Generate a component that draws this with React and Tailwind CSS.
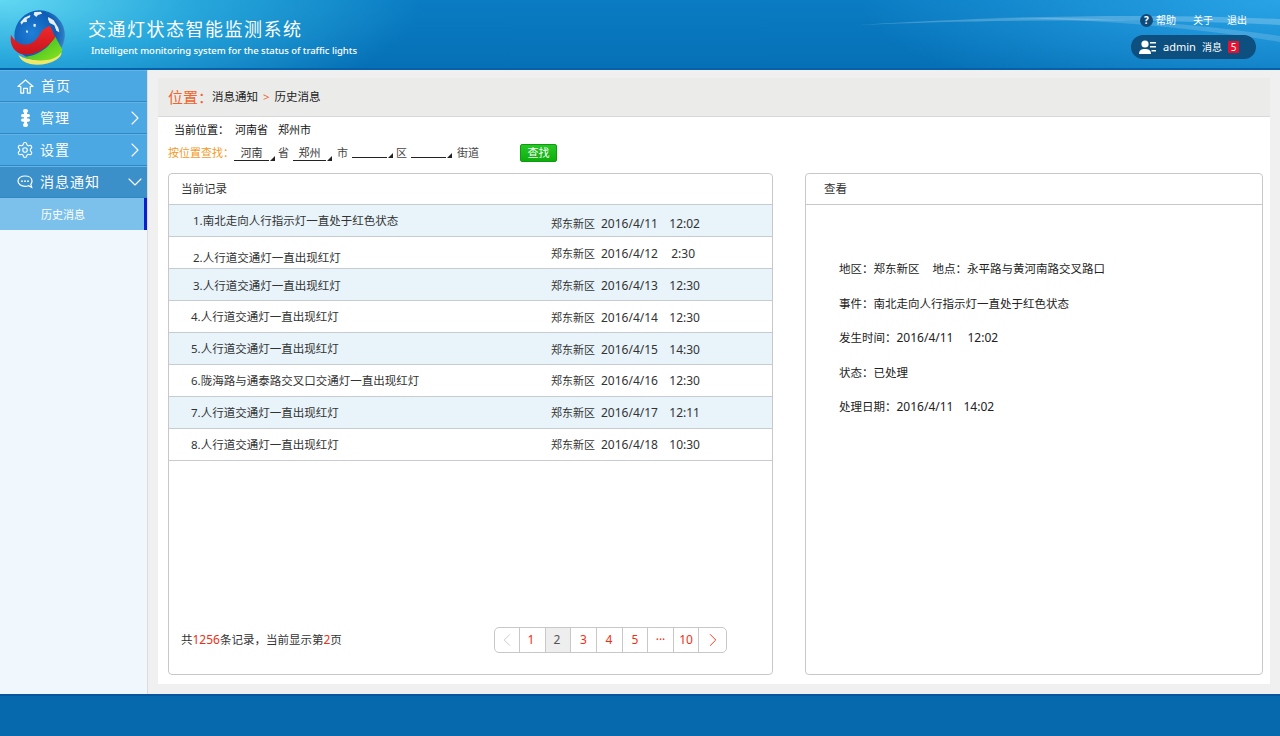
import { Settings, ChevronRight, ChevronDown, ChevronLeft } from 'lucide-react';

const FONT = "font-['Noto_Sans','Noto_Sans_CJK_SC',sans-serif]";

const RECORDS = [
  { text: '1.南北走向人行指示灯一直处于红色状态', date: '2016/4/11', time: '12:02', bg: 'bg-[#e8f3fa]', cls: 'pl-[24px] pt-[1px]', right: 'pt-[6px]' },
  { text: '2.人行道交通灯一直出现红灯', date: '2016/4/12', time: '2:30', bg: 'bg-white', cls: 'pl-[24px] pt-[10px]', right: 'pt-[2px]', timeCls: 'pr-[5px]' },
  { text: '3.人行道交通灯一直出现红灯', date: '2016/4/13', time: '12:30', bg: 'bg-[#e8f3fa]', cls: 'pl-[24px] pt-[2px]', right: 'pt-[2px]' },
  { text: '4.人行道交通灯一直出现红灯', date: '2016/4/14', time: '12:30', bg: 'bg-white', cls: 'pl-[22px]', right: 'pt-[2px]' },
  { text: '5.人行道交通灯一直出现红灯', date: '2016/4/15', time: '14:30', bg: 'bg-[#e8f3fa]', cls: 'pl-[22px]', right: 'pt-[2px]' },
  { text: '6.陇海路与通泰路交叉口交通灯一直出现红灯', date: '2016/4/16', time: '12:30', bg: 'bg-white', cls: 'pl-[22px]', right: '' },
  { text: '7.人行道交通灯一直出现红灯', date: '2016/4/17', time: '12:11', bg: 'bg-[#e8f3fa]', cls: 'pl-[22px]', right: '' },
  { text: '8.人行道交通灯一直出现红灯', date: '2016/4/18', time: '10:30', bg: 'bg-white', cls: 'pl-[22px]', right: '' },
];

const PAGES = [
  { label: '1', w: 'w-[26px] pr-[3px]' },
  { label: '2', w: 'w-[25px] pr-[2px]', active: true },
  { label: '3', w: 'w-[26px]' },
  { label: '4', w: 'w-[26px] pr-[1px]' },
  { label: '5', w: 'w-[25px]' },
  { label: '···', w: 'w-[26px]' },
  { label: '10', w: 'w-[25px]' },
];

function Logo() {
  return (
    <svg width="70" height="65" viewBox="0 0 210 195" className="shrink-0">
      <defs>
        <radialGradient id="globe" cx="0.35" cy="0.45" r="0.72">
          <stop offset="0" stopColor="#1f7fd8" />
          <stop offset="0.65" stopColor="#0d5cb4" />
          <stop offset="0.88" stopColor="#2f7fc4" />
          <stop offset="1" stopColor="#b9d6ea" />
        </radialGradient>
        <linearGradient id="red" x1="0" y1="0" x2="0" y2="1">
          <stop offset="0" stopColor="#f02a2a" />
          <stop offset="1" stopColor="#c8141e" />
        </linearGradient>
        <linearGradient id="green" x1="0" y1="0" x2="1" y2="1">
          <stop offset="0" stopColor="#1fae2c" />
          <stop offset="1" stopColor="#8fe61c" />
        </linearGradient>
      </defs>
      <circle cx="104" cy="98" r="76" fill="url(#globe)" />
      <path d="M46 58l12-14 18-8-1 7-10 5 1 9-11 1-5 7zM88 27l20-1 3 6-12 4-5 6-8-7zM130 42l16 10 14 22 3 14-9-5-6-16-14-7-5-11zM86 62l7 2-2 9-6-3zM64 82l5 1-1 7-5-2z" fill="#e6eef6" />
      <path d="M40 155c20 16 60 24 130-7-1 10-6 16-16 22-30 18-72 20-96 6-10-6-15-14-18-21z" fill="#efe86a" />
      <path d="M150 100l22 40c-4 14-16 22-32 28-28 8-60 4-84-6 30-2 58-16 76-36z" fill="url(#green)" />
      <path d="M18 95c8 16 24 30 44 30 24-1 38-20 48-40 8-8 16-14 25-17 8 18 13 28 16 34-12 20-34 38-62 48-22 8-44 6-57-7-13-12-17-30-14-48z" fill="url(#red)" />
    </svg>
  );
}

function Streaks() {
  return (
    <svg className="absolute right-0 top-0 pointer-events-none" width="420" height="68" viewBox="0 0 420 68">
      <path d="M0 25c120-8 280-12 420-6v6C280 18 120 20 0 25z" fill="#ffffff" opacity="0.22" />
      <path d="M130 18c100 0 210 10 290 24v-6C330 22 230 16 130 18z" fill="#ffffff" opacity="0.16" />
    </svg>
  );
}

function HomeIcon() {
  return (
    <svg width="17" height="15" viewBox="0 0 18 16" fill="none" stroke="#ffffff" strokeWidth="1.3" strokeLinejoin="round">
      <path d="M1 8L9 1l8 7h-3v7h-3v-5H7v5H4V8z" />
    </svg>
  );
}

function ChatIcon() {
  return (
    <svg width="16" height="14" viewBox="0 0 16 14" fill="none" stroke="#ffffff" strokeWidth="1.2">
      <path d="M8 1c4 0 7 2 7 5 0 1.500-.5 2.500-1.200 3.300l.9 3-3.200-1.600c-1 .4-2.200.6-3.500.6-4 0-7-2.300-7-5.300S4 1 8 1z" />
      <circle cx="5" cy="6.200" r="0.900" fill="#ffffff" stroke="none" />
      <circle cx="8" cy="6.200" r="0.900" fill="#ffffff" stroke="none" />
      <circle cx="11" cy="6.200" r="0.900" fill="#ffffff" stroke="none" />
    </svg>
  );
}

function TreeIcon() {
  return (
    <svg width="9" height="18" viewBox="0 0 9 18" fill="#ffffff">
      <rect x="2" y="0" width="5" height="4" rx="2" />
      <rect x="0" y="5" width="9" height="3.200" rx="1.600" />
      <rect x="0" y="9.500" width="9" height="3.200" rx="1.600" />
      <rect x="3" y="3" width="3" height="12" />
      <rect x="2" y="14" width="5" height="4" rx="2" />
    </svg>
  );
}

function UserListIcon() {
  return (
    <svg width="18" height="14" viewBox="0 0 18 14" fill="#ffffff">
      <circle cx="6" cy="4" r="3.600" />
      <path d="M0 14c0-4 2.500-5 6-5s6 1 6 5z" />
      <rect x="11" y="2" width="6" height="1.500" />
      <rect x="11" y="6" width="6" height="1.500" />
      <rect x="12.500" y="10" width="4.500" height="1.500" />
    </svg>
  );
}

function NavItem({ icon, label, arrow, active, shift }) {
  return (
    <div className={`flex items-center h-[32px] border-b border-b-[#2f87c4] border-t border-t-[#62b5e6] text-white text-[14px] tracking-[1px] ${active ? 'bg-[#3b90c9]' : 'bg-[#4ba8e2]'}`}>
      <span className="w-[40px] flex justify-center pl-[10px] shrink-0">{icon}</span>
      <span className={`flex-1 pb-[1px] ${shift}`}>{label}</span>
      {arrow === 'right' && <ChevronRight size={24} strokeWidth={1.1} />}
      {arrow === 'down' && <ChevronDown size={24} strokeWidth={1.1} />}
    </div>
  );
}

function Select({ label, w }) {
  return (
    <span className={`relative inline-block h-[15px] border-b border-[#222] text-center leading-[14px] text-[#333] ${w}`}>
      {label}
      <span className="absolute right-[-6px] bottom-[-1px] w-0 h-0 border-l-[5px] border-l-transparent border-b-[5px] border-b-[#222]" />
    </span>
  );
}

function Sidebar() {
  return (
    <aside className="w-[148px] shrink-0 bg-[#f0f8fe] border-r border-[#dcdcdc]">
      <NavItem icon={<HomeIcon />} label="首页" shift="pl-[1px]" />
      <NavItem icon={<TreeIcon />} label="管理" arrow="right" />
      <NavItem icon={<Settings size={18} strokeWidth={1.5} />} label="设置" arrow="right" />
      <NavItem icon={<ChatIcon />} label="消息通知" arrow="down" active />
      <div className="flex items-center h-[32px] pl-[41px] pt-[2px] bg-[#7cc1ec] border-r-[3px] border-r-[#0a1fd0] text-white text-[11px]">历史消息</div>
    </aside>
  );
}

function RecordRow({ row }) {
  return (
    <div className={`flex items-center h-[32px] border-b border-[#c6ccd0] text-[#333] text-[11.5px] ${row.bg}`}>
      <div className={`w-[382px] shrink-0 ${row.cls}`}>{row.text}</div>
      <div className={`flex ${row.right}`}>
        <span className="w-[50px] text-[11px] leading-[18px]">郑东新区</span>
        <span className="w-[66px] text-[12px]">{row.date}</span>
        <span className={`text-[12px] w-[33px] text-right ${row.timeCls}`}>{row.time}</span>
      </div>
    </div>
  );
}

function Pagination() {
  return (
    <div className="flex h-[26px] border border-[#c8c8c8] rounded-[5px] overflow-hidden text-[12px] text-[#ee2f14]">
      <div className="w-[25px] flex items-center justify-center border-r border-[#c8c8c8] text-[#c8c8c8]">
        <ChevronLeft size={22} strokeWidth={1} />
      </div>
      {PAGES.map(({ label, w, active }) => (
        <div key={label} className={`${w} flex items-center justify-center border-r border-[#c8c8c8] ${active ? 'bg-[#eeeeee] text-[#555]' : ''}`}>
          {label}
        </div>
      ))}
      <div className="w-[27px] flex items-center justify-center">
        <ChevronRight size={22} strokeWidth={1} />
      </div>
    </div>
  );
}

export default function App() {
  return (
    <div className={`h-[736px] w-[1280px] flex flex-col overflow-hidden ${FONT}`}>
      {/* Header */}
      <header className="relative h-[70px] shrink-0 flex bg-[radial-gradient(ellipse_420px_130px_at_0%_0%,#62d8f2_0%,#28a8dc_45%,transparent_100%),radial-gradient(ellipse_420px_110px_at_100%_0%,#29a3e6_0%,transparent_100%),linear-gradient(#0a7cc3,#0670b6)] border-b-2 border-[#0761a8]">
        <Streaks />
        <div className="pl-[5px] pt-[3px]"><Logo /></div>
        <div className="pl-[13px]">
          <div className="pt-[16px] text-[18px] leading-[26px] tracking-[1.5px] text-white">交通灯状态智能监测系统</div>
          <div className="pt-[2px] pl-[3px] text-[9.5px] leading-[14px] tracking-[-0.03px] text-white font-medium">Intelligent monitoring system for the status of traffic lights</div>
        </div>
        <div className="relative ml-auto pr-[24px] flex flex-col items-end">
          <div className="flex items-center h-[14px] mt-[13px] pr-[9px] text-[10px] text-white">
            <span className="w-[13px] h-[13px] mr-[3px] rounded-full bg-[#0f4a78] text-[10px] leading-[13px] text-center font-bold">?</span>
            <span className="w-[37px] pt-[1px]">帮助</span>
            <span className="w-[34px]">关于</span>
            <span>退出</span>
          </div>
          <div className="flex items-center w-[125px] h-[24px] mt-[8px] pl-[8px] rounded-full bg-[#0d4f7f] text-white text-[10px]">
            <UserListIcon />
            <span className="ml-[6px] w-[39px] text-[11px]">admin</span>
            <span className="w-[26px]">消息</span>
            <span className="w-[11px] h-[12px] bg-[#e8102e] text-center leading-[12px]">5</span>
          </div>
        </div>
      </header>

      <div className="flex flex-1 min-h-0">
        <Sidebar />
        <main className="flex-1 min-w-0 bg-[#f0f0f0] pt-[8px] pr-[10px] pb-[10px] pl-[10px]">
          <div className="h-full flex flex-col bg-white">
            {/* Breadcrumb */}
            <div className="flex items-center h-[39px] shrink-0 pl-[10px] bg-[#ebebea] border-b border-[#d8d8d8] text-[11.5px] text-[#222]">
              <span className="text-[15px] text-[#f0632c]">位置：</span>
              <span className="ml-[-1px]">消息通知</span>
              <span className="px-[5px] text-[#f0632c]">&gt;</span>
              <span>历史消息</span>
            </div>

            {/* Location filter */}
            <div className="pl-[16px] pt-[5px] h-[20px] box-content text-[11px] leading-[16px] text-[#111]">
              当前位置：<span className="ml-[6px]">河南省</span><span className="ml-[10px]">郑州市</span>
            </div>
            <div className="flex items-center h-[22px] pl-[10px] text-[11px] text-[#444]">
              <span className="text-[#f39a1f]">按位置查找：</span>
              <Select label="河南" w="w-[35px]" />
              <span className="ml-[9px]">省</span>
              <Select label="郑州" w="w-[33px] ml-[4px]" />
              <span className="ml-[11px]">市</span>
              <span className="ml-[4px]"><Select label="" w="w-[35px]" /></span>
              <span className="ml-[9px]">区</span>
              <span className="ml-[4px]"><Select label="" w="w-[35px]" /></span>
              <span className="ml-[11px]">街道</span>
              <button className="ml-[41px] w-[37px] h-[18px] rounded-[2px] bg-[linear-gradient(#26c726,#0eae0e)] border border-[#0e9c0e] text-white text-[11px] leading-[16px]">查找</button>
            </div>

            {/* Cards */}
            <div className="flex gap-[32px] pl-[10px] pr-[7px] pt-[9px] pb-[9px] flex-1 min-h-0">
              <section className="w-[605px] flex flex-col border border-[#c8c8c8] rounded-[4px]">
                <div className="h-[31px] shrink-0 pl-[12px] flex items-center border-b border-[#c6ccd0] text-[11.5px] text-[#333]">当前记录</div>
                {RECORDS.map((row) => <RecordRow key={row.text} row={row} />)}
                <div className="mt-auto mb-[21px] flex items-center pl-[12px] text-[11.5px] text-[#333]">
                  <span className="w-[313px]">共<span className="text-[#ee2f14] text-[12px]">1256</span>条记录，当前显示第<span className="text-[#ee2f14] text-[12px]">2</span>页</span>
                  <Pagination />
                </div>
              </section>

              <section className="flex-1 flex flex-col border border-[#c8c8c8] rounded-[4px]">
                <div className="h-[31px] shrink-0 pl-[18px] flex items-center border-b border-[#c8c8c8] text-[11.5px] text-[#333]">查看</div>
                <div className="pl-[33px] pt-[56px] flex flex-col gap-[18.500px] text-[11.5px] leading-[16px] text-[#222]">
                  <div>地区：郑东新区<span className="ml-[13px]">地点：永平路与黄河南路交叉路口</span></div>
                  <div>事件：南北走向人行指示灯一直处于红色状态</div>
                  <div>发生时间：<span className="text-[12px]">2016/4/11</span><span className="ml-[14px] text-[12px]">12:02</span></div>
                  <div>状态：已处理</div>
                  <div>处理日期：<span className="text-[12px]">2016/4/11</span><span className="ml-[10px] text-[12px]">14:02</span></div>
                </div>
              </section>
            </div>
          </div>
        </main>
      </div>

      <footer className="h-[42px] shrink-0 bg-[#0669ad] border-t-2 border-[#0657a0]" />
    </div>
  );
}
